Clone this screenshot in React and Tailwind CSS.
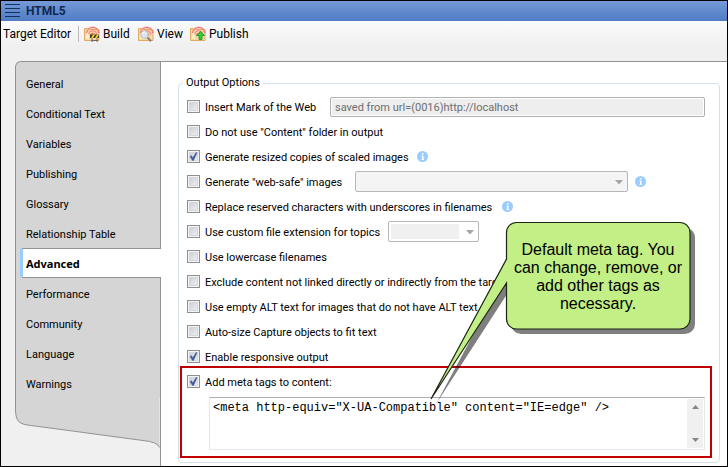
import React from "react";

const navItems = [
  "General",
  "Conditional Text",
  "Variables",
  "Publishing",
  "Glossary",
  "Relationship Table",
  "Advanced",
  "Performance",
  "Community",
  "Language",
  "Warnings",
];

function FolderBase() {
  return (
    <>
      <path d="M0.5 14.500V2.500h4.500l1 1h9v11z" fill="#f6d9a0" stroke="#dfab62" />
      <path d="M1.500 12.500L3 6h2v7z" fill="#fdf0c8" />
      <path d="M2.500 8.500a6.200 7 0 0 1 12.500 0V5A6.500 5.500 0 0 0 8.700 0 6.500 5.500 0 0 0 2.500 5z" fill="#fcdedb" />
      <path d="M2.500 7A6.300 6.300 0 0 1 15 7" fill="none" stroke="#f5797b" strokeWidth="1.500" />
      <path d="M4.700 8.500A4.100 4.300 0 0 1 12.800 8.500" fill="none" stroke="#f78e8e" strokeWidth="1.300" />
      <path d="M6.700 9.500A2.100 2.500 0 0 1 10.800 9.500" fill="none" stroke="#f26265" strokeWidth="1.400" />
    </>
  );
}

function BuildIcon() {
  return (
    <svg width="16" height="16" viewBox="0 0 16 16" aria-hidden="true">
      <FolderBase />
      <path d="M8 12V16M13 12V16M7 14.500h7" stroke="#6a6a66" fill="none" />
      <rect x="6" y="8.500" width="9" height="3.500" fill="#3b3b33" />
      <path d="M7 12l2-3.500h2L9 12zM11 12l2-3.500h2L13 12z" fill="#f7d330" />
    </svg>
  );
}

function ViewIcon() {
  return (
    <svg width="16" height="16" viewBox="0 0 16 16" aria-hidden="true">
      <FolderBase />
      <path d="M9.500 11.500l3.500 3.800" stroke="#8a7d80" strokeWidth="2" />
      <circle cx="6.500" cy="8.500" r="3.800" fill="#dce6ee" stroke="#b3bcc6" />
      <path d="M4.500 8a2.200 2.200 0 0 1 2.500-2" stroke="#fff" fill="none" />
    </svg>
  );
}

function PublishIcon() {
  return (
    <svg width="16" height="16" viewBox="0 0 16 16" aria-hidden="true">
      <FolderBase />
      <path d="M10.500 5.500l4 4h-2.500v4h-3v-4H6.500z" fill="#2fd138" stroke="#15912a" strokeWidth="0.800" />
    </svg>
  );
}

function InfoIcon() {
  return (
    <svg className="shrink-0" width="11" height="11" viewBox="0 0 11 11" role="img" aria-label="Information">
      <circle cx="5.500" cy="5.500" r="5.500" fill="#99ccff" />
      <path d="M5 2h1.500v1.500H5zM4.500 4.500h2V8H7v1H4.500V8H5V5.500h-.5z" fill="#fff" />
    </svg>
  );
}

function Check({ id, label, checked = false, width = "" }) {
  return (
    <div className={`flex shrink-0 items-center gap-[5px] ${width}`}>
      <span className="grid size-[13px] shrink-0">
        <input
          id={id}
          type="checkbox"
          defaultChecked={checked}
          className="peer col-start-1 row-start-1 size-[13px] appearance-none border border-[#8e8f8f] bg-linear-to-br from-[#c6cad2] to-[#f6f6f6] shadow-[inset_0_0_0_1px_#f4f4f4,inset_0_0_0_2px_#d3d6da]"
        />
        <svg
          className="pointer-events-none invisible col-start-1 row-start-1 peer-checked:visible"
          width="13"
          height="13"
          viewBox="0 0 13 13"
          aria-hidden="true"
        >
          <path d="M3 6.500l1.500-.8L5.800 8 9 2.500l1 .3L6.500 10.500h-1z" fill="#3f5a9c" stroke="#3f5a9c" strokeWidth="0.500" />
        </svg>
      </span>
      <label htmlFor={id} className="pt-[2px] whitespace-nowrap">
        {label}
      </label>
    </div>
  );
}

function Row({ children }) {
  return <div className="flex h-[25px] items-center">{children}</div>;
}

function Combo({ label, className, field }) {
  return (
    <div className={`relative h-[21px] rounded-xs border border-[#b4b8bb] p-[2px] ${className}`}>
      <select disabled aria-label={label} className={`block h-full appearance-none opacity-100 ${field}`} />
      <svg className="pointer-events-none absolute top-2 right-1" width="8" height="5" viewBox="0 0 8 5" aria-hidden="true">
        <path d="M0 0h8L4 4.500z" fill="#a5a5a5" />
      </svg>
    </div>
  );
}

function ToolButton({ icon, children }) {
  return (
    <button type="button" className="flex items-center gap-[3px]">
      {icon}
      {children}
    </button>
  );
}

function Callout() {
  return (
    <div className="pointer-events-none absolute top-[220px] left-[428px] h-[184px] w-[268px]">
      <svg className="absolute inset-0" width="268" height="184" viewBox="0 0 268 184" aria-hidden="true">
        <path
          d="M87 1.500H251a10 10 0 0 1 10 10V98a10 10 0 0 1-10 10H87a10 10 0 0 1-10-10V62L2 178 77 38V11.500a10 10 0 0 1 10-10z"
          fill="#000"
          fillOpacity="0.500"
          transform="translate(5 5)"
        />
        <path
          d="M87.500 1.500H251a10 10 0 0 1 10 10V98a10 10 0 0 1-10 10H87.500a10 10 0 0 1-10-10V62L2 178 77.500 38V11.500a10 10 0 0 1 10-10z"
          fill="#c2ef86"
          stroke="#1d2414"
          strokeWidth="1.200"
        />
      </svg>
      <p className="absolute top-5 left-[78px] w-[182px] px-1 text-center font-['Liberation_Sans',sans-serif] text-[16px] leading-[18px]">
        Default meta tag. You can change, remove, or add other tags as necessary.
      </p>
    </div>
  );
}

export default function App() {
  return (
    <div className="relative flex min-h-screen flex-col border border-black bg-[#f0f0f0] font-[Roboto,sans-serif] text-[11px] leading-[14px] text-black">
      <header className="flex h-5 items-center gap-[6px] bg-linear-to-b from-[#759ad6] to-[#4f7cc5] pl-1 text-[#0e2850]">
        <svg width="15" height="14" viewBox="0 0 15 14" aria-hidden="true">
          <path d="M0 .5h15M0 4.500h15M0 8.500h15M0 12.500h15" stroke="#17305c" />
        </svg>
        <h1 className="text-[12px] font-bold">HTML5</h1>
      </header>

      <div className="flex h-[25px] items-center bg-linear-to-b from-[#fbfbfb] to-[#f0f0f0] pl-[2px] text-[12px]">
        <span className="w-[75px] whitespace-nowrap">Target Editor</span>
        <span className="mr-[5px] h-4 w-px bg-[#bdbdbd]" />
        <div className="flex">
          <div className="w-[54px]">
            <ToolButton icon={<BuildIcon />}>Build</ToolButton>
          </div>
          <div className="w-[52px]">
            <ToolButton icon={<ViewIcon />}>View</ToolButton>
          </div>
          <ToolButton icon={<PublishIcon />}>Publish</ToolButton>
        </div>
      </div>

      <div className="mt-[15px] flex grow pl-[14px]">
        <nav className="flex w-[146px] shrink-0 flex-col">
          <div className="h-[7px] rounded-tl-[6px] border-t border-r border-l border-[#929292] bg-[#d5d5d5]" />
          {navItems.map((item) =>
            item === "Advanced" ? (
              <div key={item} className="flex h-[30px] border-l border-[#929292] bg-[#d5d5d5] pl-1">
                <a
                  href="#advanced"
                  aria-current="page"
                  className="flex grow items-center rounded-l-[3px] border-y border-l-3 border-y-[#929292] border-l-[#99ccff] bg-white pt-px pl-[3px] font-['Noto_Sans',sans-serif] font-bold"
                >
                  {item}
                </a>
              </div>
            ) : (
              <a
                key={item}
                href={`#${item.toLowerCase().replace(" ", "-")}`}
                className="flex h-[30px] items-center border-x border-[#929292] bg-[#d5d5d5] pt-[3px] pl-[10px]"
              >
                {item}
              </a>
            )
          )}
          <div className="grow border-r border-[#929292]">
            <svg width="145" height="50" viewBox="0 0 145 50" aria-hidden="true">
              <path d="M.5 0V13Q1 24 7 25.500 10 27 20 28L128 42.500Q143 44 144.500 49.500V0z" fill="#d5d5d5" />
              <path d="M.5 0V13Q1 24 7 25.500 10 27 20 28L128 42.500Q143 44 144.500 49.500" fill="none" stroke="#929292" />
            </svg>
          </div>
        </nav>

        <main className="min-w-0 grow border-t border-[#929292] bg-white pt-[14px] pr-[7px] pb-[3px] pl-[17px]">
          <fieldset className="min-w-0 rounded-[4px] border border-[#d5dfe5]">
            <legend className="ml-1 px-[3px]">Output Options</legend>
            <div className="pt-1 pr-[14px] pl-2">
              <Row>
                <Check id="motw" label="Insert Mark of the Web" width="w-[143px]" />
                <input
                  type="text"
                  disabled
                  aria-label="Mark of the Web"
                  defaultValue="saved from url=(0016)http://localhost"
                  className="h-5 min-w-0 grow rounded-xs border border-[#b0b0b0] bg-[#eeeeee] px-1 pt-px text-[#6d6d6d] shadow-[inset_0_0_0_1px_#fff]"
                />
              </Row>
              <Row>
                <Check id="content-folder" label={'Do not use "Content" folder in output'} />
              </Row>
              <Row>
                <Check id="resized" label="Generate resized copies of scaled images" checked width="w-[230px]" />
                <InfoIcon />
              </Row>
              <Row>
                <Check id="web-safe" label={'Generate "web-safe" images'} width="w-[168px]" />
                <Combo label="Web-safe image format" className="mr-[7px] w-[273px] bg-[#f4f4f4]" field="w-full bg-[#f4f4f4]" />
                <InfoIcon />
              </Row>
              <Row>
                <Check id="underscores" label="Replace reserved characters with underscores in filenames" width="w-[315px]" />
                <InfoIcon />
              </Row>
              <Row>
                <Check id="extension" label="Use custom file extension for topics" width="w-[201px]" />
                <Combo label="File extension" className="w-[91px] bg-white" field="w-[68px] bg-[#f0f0f0]" />
              </Row>
              <Row>
                <Check id="lowercase" label="Use lowercase filenames" />
              </Row>
              <Row>
                <Check id="exclude" label="Exclude content not linked directly or indirectly from the target" />
              </Row>
              <Row>
                <Check id="empty-alt" label="Use empty ALT text for images that do not have ALT text" />
              </Row>
              <Row>
                <Check id="auto-size" label="Auto-size Capture objects to fit text" />
              </Row>
              <Row>
                <Check id="responsive" label="Enable responsive output" checked />
              </Row>
            </div>
            <div className="-mt-[3px] mr-[7px] mb-1 ml-px border-2 border-[#c00000] pt-px pr-[5px] pb-[6px] pl-[5px]">
              <Row>
                <Check id="meta-tags" label="Add meta tags to content:" checked />
              </Row>
              <div className="mt-[3px] ml-[22px] flex h-[53px] border border-[#e3e9ef] border-t-[#abadb3] bg-white p-px">
                <textarea
                  aria-label="Meta tags"
                  spellCheck={false}
                  defaultValue={'<meta http-equiv="X-UA-Compatible" content="IE=edge" />'}
                  className="min-w-0 grow resize-none overflow-hidden px-[2px] pt-[2px] font-['Liberation_Mono',monospace] text-[12px] leading-[14px]"
                />
                <div className="flex w-4 flex-col justify-between bg-[#f0f0f0]">
                  <button type="button" aria-label="Scroll up" className="flex h-4 items-center justify-center">
                    <svg width="7" height="4" viewBox="0 0 7 4" aria-hidden="true">
                      <path d="M0 4h7L3.500 0z" fill="#858585" />
                    </svg>
                  </button>
                  <button type="button" aria-label="Scroll down" className="flex h-4 items-center justify-center">
                    <svg width="7" height="4" viewBox="0 0 7 4" aria-hidden="true">
                      <path d="M0 0h7L3.500 4z" fill="#858585" />
                    </svg>
                  </button>
                </div>
              </div>
            </div>
          </fieldset>
        </main>
      </div>

      <Callout />
    </div>
  );
}
